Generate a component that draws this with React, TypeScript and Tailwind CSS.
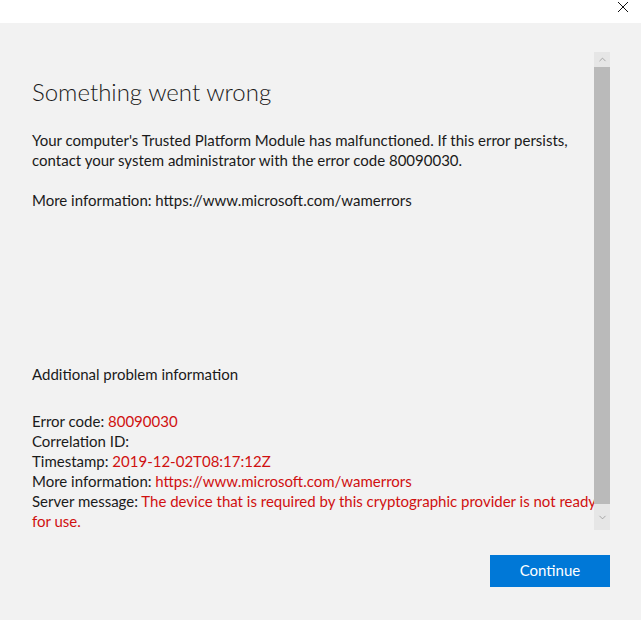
import { ChevronUp, ChevronDown } from "lucide-react";

const red = "text-[#d01010]";

export default function App() {
  return (
    <div
      className="flex h-[620px] w-[641px] flex-col bg-[#f2f2f2] text-[15px] leading-[20px] text-[#1a1a1a]"
      style={{ fontFamily: "Lato, 'Noto Sans', sans-serif" }}
    >
      <div className="flex h-[23px] shrink-0 justify-end bg-white">
        <svg width="12" height="12" viewBox="0 0 12 12" className="mr-[12px] mt-[1px]">
          <path d="M1 1 L11 11 M11 1 L1 11" stroke="#111" strokeWidth="1" fill="none" />
        </svg>
      </div>

      <div className="mt-[29px] flex h-[478px] shrink-0">
        <div className="w-[594px] shrink-0 overflow-hidden pl-[32px]">
          <div className="w-[600px]">
            <h1 className="mt-[24px] text-[24px] font-light leading-[32px] text-[#1a1a1a]">
              Something went wrong
            </h1>
            <p className="mt-[22px]">
              Your computer's Trusted Platform Module has malfunctioned. If this error persists,
              <br />
              contact your system administrator with the error code 80090030.
            </p>
            <p className="mt-[20px]">More information: https://www.microsoft.com/wamerrors</p>
            <p className="mt-[154px]">Additional problem information</p>
            <div className="mt-[27px]">
              <p>
                Error code: <span className={red}>80090030</span>
              </p>
              <p>Correlation ID:</p>
              <p>
                Timestamp: <span className={red}>2019-12-02T08:17:12Z</span>
              </p>
              <p>
                More information: <span className={red}>https://www.microsoft.com/wamerrors</span>
              </p>
              <p className="whitespace-nowrap">
                Server message:{" "}
                <span className={red}>
                  The device that is required by this cryptographic provider is not ready
                </span>
              </p>
              <p className={red}>for use.</p>
            </div>
          </div>
        </div>

        <div className="flex w-[16px] shrink-0 flex-col bg-[#e9e9e9]">
          <div className="flex h-[15px] items-center justify-center bg-[#e6e6e6]">
            <ChevronUp className="h-[11px] w-[11px] text-[#8a8a8a]" strokeWidth={1.5} />
          </div>
          <div className="flex-1 bg-[#bababa]" />
          <div className="flex h-[26px] items-center justify-center bg-[#e6e6e6]">
            <ChevronDown className="h-[11px] w-[11px] text-[#8a8a8a]" strokeWidth={1.5} />
          </div>
        </div>
      </div>

      <div className="flex justify-end pr-[31px] pt-[25px]">
        <button className="h-[32px] w-[120px] bg-[#0078d7] pb-[2px] text-[15px] text-white">Continue</button>
      </div>
    </div>
  );
}
